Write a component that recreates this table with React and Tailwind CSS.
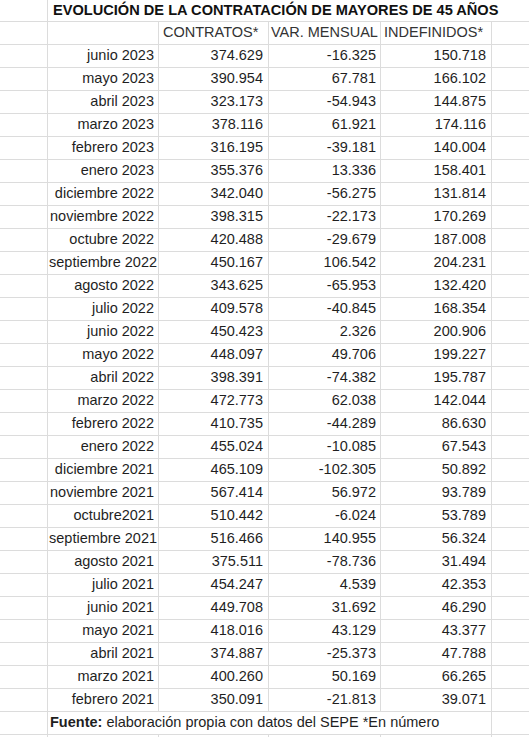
const rows = [
  ["junio 2023", "374.629", "-16.325", "150.718"],
  ["mayo 2023", "390.954", "67.781", "166.102"],
  ["abril 2023", "323.173", "-54.943", "144.875"],
  ["marzo 2023", "378.116", "61.921", "174.116"],
  ["febrero 2023", "316.195", "-39.181", "140.004"],
  ["enero 2023", "355.376", "13.336", "158.401"],
  ["diciembre 2022", "342.040", "-56.275", "131.814"],
  ["noviembre 2022", "398.315", "-22.173", "170.269"],
  ["octubre 2022", "420.488", "-29.679", "187.008"],
  ["septiembre 2022", "450.167", "106.542", "204.231"],
  ["agosto 2022", "343.625", "-65.953", "132.420"],
  ["julio 2022", "409.578", "-40.845", "168.354"],
  ["junio 2022", "450.423", "2.326", "200.906"],
  ["mayo 2022", "448.097", "49.706", "199.227"],
  ["abril 2022", "398.391", "-74.382", "195.787"],
  ["marzo 2022", "472.773", "62.038", "142.044"],
  ["febrero 2022", "410.735", "-44.289", "86.630"],
  ["enero 2022", "455.024", "-10.085", "67.543"],
  ["diciembre 2021", "465.109", "-102.305", "50.892"],
  ["noviembre 2021", "567.414", "56.972", "93.789"],
  ["octubre2021", "510.442", "-6.024", "53.789"],
  ["septiembre 2021", "516.466", "140.955", "56.324"],
  ["agosto 2021", "375.511", "-78.736", "31.494"],
  ["julio 2021", "454.247", "4.539", "42.353"],
  ["junio 2021", "449.708", "31.692", "46.290"],
  ["mayo 2021", "418.016", "43.129", "43.377"],
  ["abril 2021", "374.887", "-25.373", "47.788"],
  ["marzo 2021", "400.260", "50.169", "66.265"],
  ["febrero 2021", "350.091", "-21.813", "39.071"],
];

const line = "border-[#dcdcdc]";

function Cell({ w, children, className = "" }) {
  return (
    <div
      className={`${w} h-full shrink-0 border-r ${line} flex items-center whitespace-nowrap ${className}`}
    >
      {children}
    </div>
  );
}

function Row({ children, h = "h-[23px]" }) {
  return <div className={`flex ${h} border-b ${line}`}>{children}</div>;
}

export default function App() {
  return (
    <div
      className="w-[529px] h-[737px] overflow-hidden bg-white text-[#1f1f1f] text-[14.5px]"
      style={{ fontFamily: '"Liberation Sans", Arial, sans-serif' }}
    >
      <Row h="h-[22px]">
        <Cell w="w-[48px]" />
        <div className="shrink-0 flex items-center pl-[5px] font-bold text-[14.6px] whitespace-nowrap text-[#111]">
          EVOLUCIÓN DE LA CONTRATACIÓN DE MAYORES DE 45 AÑOS
        </div>
      </Row>
      <Row>
        <Cell w="w-[48px]" />
        <Cell w="w-[111px]" />
        <Cell w="w-[110px]" className="pl-[4px] text-[#333]">CONTRATOS*</Cell>
        <Cell w="w-[112px]" className="pl-[2px] text-[#333]">VAR. MENSUAL</Cell>
        <Cell w="w-[111px]" className="pl-[3px] text-[#333]">INDEFINIDOS*</Cell>
        <div className="flex-1" />
      </Row>
      {rows.map((r, i) => (
        <Row key={i}>
          <Cell w="w-[48px]" />
          <Cell
            w="w-[111px]"
            className={
              r[0].length > 14
                ? "justify-start pl-[1px] overflow-hidden"
                : "justify-end pr-[4px]"
            }
          >
            {r[0]}
          </Cell>
          <Cell w="w-[110px]" className="justify-end pr-[5px]">{r[1]}</Cell>
          <Cell w="w-[112px]" className="justify-end pr-[4px]">{r[2]}</Cell>
          <Cell w="w-[111px]" className="justify-end pr-[5px]">{r[3]}</Cell>
          <div className="flex-1" />
        </Row>
      ))}
      <Row>
        <Cell w="w-[48px]" />
        <Cell w="w-[444px]" className="pl-[2px]">
          <span className="font-bold">Fuente:</span>
          <span>&nbsp;elaboración propia con datos del SEPE *En número</span>
        </Cell>
        <div className="flex-1" />
      </Row>
      <Row>
        <Cell w="w-[48px]" />
        <Cell w="w-[111px]" />
        <Cell w="w-[110px]" />
        <Cell w="w-[112px]" />
        <Cell w="w-[111px]" />
        <div className="flex-1" />
      </Row>
    </div>
  );
}
